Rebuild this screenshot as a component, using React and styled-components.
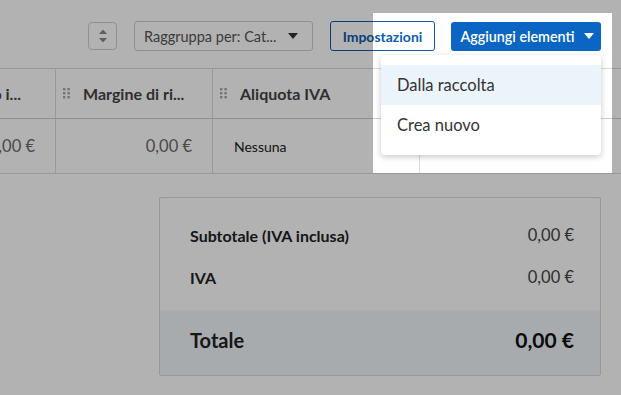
import React from 'react'
import styled, { createGlobalStyle } from 'styled-components'

const GlobalStyle = createGlobalStyle`
  html, body {
    margin: 0;
    padding: 0;
    background: #ffffff;
  }
  body {
    font-family: Lato, "Open Sans", Arial, sans-serif;
    color: #333;
  }
`

function Caret({ color }) {
  return (
    <svg width="10" height="6" viewBox="0 0 10 6">
      <path d="M0 0 L10 0 L5 6 Z" fill={color} />
    </svg>
  )
}

function SortIcon() {
  return (
    <svg width="10" height="16" viewBox="0 0 10 16">
      <path d="M1 6 L5 1.5 L9 6 Z" fill="#888" />
      <path d="M1 10 L5 14.5 L9 10 Z" fill="#888" />
    </svg>
  )
}

function Handle() {
  return (
    <svg width="7" height="11" viewBox="0 0 7 11">
      {[0, 4, 8].map((y) => (
        <g key={y}>
          <rect x="0" y={y} width="2.4" height="2.4" fill="#a6a6a6" />
          <rect x="4.4" y={y} width="2.4" height="2.4" fill="#a6a6a6" />
        </g>
      ))}
    </svg>
  )
}

function App() {
  return (
    <Page>
      <GlobalStyle />
      <Toolbar>
        <SortButton>
          <SortIcon />
        </SortButton>
        <Select>
          <span>Raggruppa per: Cat...</span>
          <Caret color="#333" />
        </Select>
        <OutlineButton>Impostazioni</OutlineButton>
        <PrimaryWrap>
          <PrimaryButton>
            Aggiungi elementi
            <Caret color="#fff" />
          </PrimaryButton>
          <Menu>
            <MenuItem active>Dalla raccolta</MenuItem>
            <MenuItem>Crea nuovo</MenuItem>
          </Menu>
        </PrimaryWrap>
      </Toolbar>

      <Table>
        <HeadCell clipped>Prezzo unitario i...</HeadCell>
        <HeadCell>
          <Handle />
          Margine di ri...
        </HeadCell>
        <HeadCell>
          <Handle />
          Aliquota IVA
        </HeadCell>
        <HeadCell last />

        <BodyCell amount>0,00 €</BodyCell>
        <BodyCell amount>0,00 €</BodyCell>
        <BodyCell>Nessuna</BodyCell>
        <BodyCell last />
      </Table>

      <SummaryRow>
        <Summary>
          <SummaryLine>
            <Label>Subtotale (IVA inclusa)</Label>
            <Value>0,00 €</Value>
          </SummaryLine>
          <SummaryLine>
            <Label>IVA</Label>
            <Value>0,00 €</Value>
          </SummaryLine>
          <TotalLine>
            <TotalLabel>Totale</TotalLabel>
            <TotalValue>0,00 €</TotalValue>
          </TotalLine>
        </Summary>
      </SummaryRow>

      <Spotlight />
    </Page>
  )
}

export default App

const Page = styled.div`
  position: relative;
  width: 100vw;
  height: 100vh;
  overflow: hidden;
  background: #fff;
  padding-top: 21px;
  box-sizing: border-box;
`

const Toolbar = styled.div`
  display: flex;
  justify-content: flex-end;
  align-items: center;
  gap: 17px;
  padding-right: 20px;
  height: 30px;
`

const SortButton = styled.div`
  width: 29px;
  height: 28px;
  box-sizing: border-box;
  border: 1px solid #cfcfcf;
  border-radius: 4px;
  display: flex;
  align-items: center;
  justify-content: center;
`

const Select = styled.div`
  width: 179px;
  height: 30px;
  box-sizing: border-box;
  border: 1px solid #cfcfcf;
  border-radius: 3px;
  display: flex;
  align-items: center;
  justify-content: space-between;
  padding: 0 14px 0 9px;
  font-size: 14.5px;
  color: #555;
`

const OutlineButton = styled.div`
  width: 105px;
  height: 30px;
  box-sizing: border-box;
  border: 1px solid #0b5cad;
  border-radius: 3px;
  display: flex;
  align-items: center;
  justify-content: center;
  color: #0b5cad;
  font-size: 14px;
  font-weight: 700;
  margin-right: -1px;
`

const PrimaryWrap = styled.div`
  position: relative;
`

const PrimaryButton = styled.div`
  width: 150px;
  height: 29px;
  box-sizing: border-box;
  background: #0a66c2;
  border-radius: 3px;
  display: flex;
  align-items: center;
  justify-content: center;
  gap: 9px;
  color: #fff;
  font-size: 14.3px;
  font-weight: 600;
  padding-left: 2px;
`

const Menu = styled.div`
  position: absolute;
  top: 33px;
  right: 0;
  width: 220px;
  padding: 10px 0;
  background: #fff;
  border-radius: 4px;
  box-shadow: 0 2px 6px rgba(0, 0, 0, 0.22);
  z-index: 2;
`

const MenuItem = styled.div`
  height: 40px;
  display: flex;
  align-items: center;
  padding-left: 16px;
  font-size: 16.5px;
  color: #333;
  background: ${(p) => (p.active ? '#ebf3fb' : 'transparent')};
`

const Table = styled.div`
  margin-top: 17px;
  display: grid;
  grid-template-columns: 56px 157px 207px 1fr;
  grid-template-rows: 50px 55px;
  border-top: 1px solid #d9d9d9;
`

const HeadCell = styled.div`
  display: flex;
  align-items: center;
  justify-content: ${(p) => (p.clipped ? 'flex-end' : 'flex-start')};
  gap: 13px;
  padding: ${(p) => (p.clipped ? '0 34px 0 0' : '0 0 0 7px')};
  overflow: hidden;
  white-space: nowrap;
  font-size: 16px;
  font-weight: 700;
  color: #444;
  border-bottom: 1px solid #cfcfcf;
  border-right: ${(p) => (p.last ? 'none' : '1px solid #dcdcdc')};
`

const BodyCell = styled.div`
  display: flex;
  align-items: center;
  justify-content: ${(p) => (p.amount ? 'flex-end' : 'flex-start')};
  padding: ${(p) => (p.amount ? '0 20px 0 0' : '0 0 0 21px')};
  overflow: hidden;
  white-space: nowrap;
  font-size: ${(p) => (p.amount ? '16.5px' : '14px')};
  color: ${(p) => (p.amount ? '#6a6a6a' : '#222')};
  border-bottom: 1px solid #dcdcdc;
  border-right: ${(p) => (p.last ? 'none' : '1px solid #dcdcdc')};
`

const SummaryRow = styled.div`
  display: flex;
  justify-content: flex-end;
  padding: 23px 20px 0 0;
`

const Summary = styled.div`
  width: 442px;
  box-sizing: border-box;
  border: 1px solid #dadada;
  border-radius: 2px;
  padding-top: 16px;
  display: flex;
  flex-direction: column;
`

const SummaryLine = styled.div`
  display: flex;
  justify-content: space-between;
  align-items: center;
  height: 42px;
  padding: 0 26px 0 30px;
`

const Label = styled.span`
  font-size: 16px;
  font-weight: 700;
  color: #222;
`

const Value = styled.span`
  font-size: 16.5px;
  color: #444;
`

const TotalLine = styled.div`
  margin-top: 12px;
  height: 65px;
  display: flex;
  justify-content: space-between;
  align-items: center;
  padding: 0 26px 6px 30px;
  box-sizing: border-box;
  background: #f1f5f9;
`

const TotalLabel = styled.span`
  font-size: 20px;
  font-weight: 700;
  color: #222;
`

const TotalValue = styled.span`
  font-size: 21px;
  font-weight: 700;
  color: #111;
`

const Spotlight = styled.div`
  position: absolute;
  top: 13px;
  left: 373px;
  width: 239px;
  height: 160px;
  box-shadow: 0 0 0 2000px rgba(0, 0, 0, 0.3);
  pointer-events: none;
  z-index: 5;
`
